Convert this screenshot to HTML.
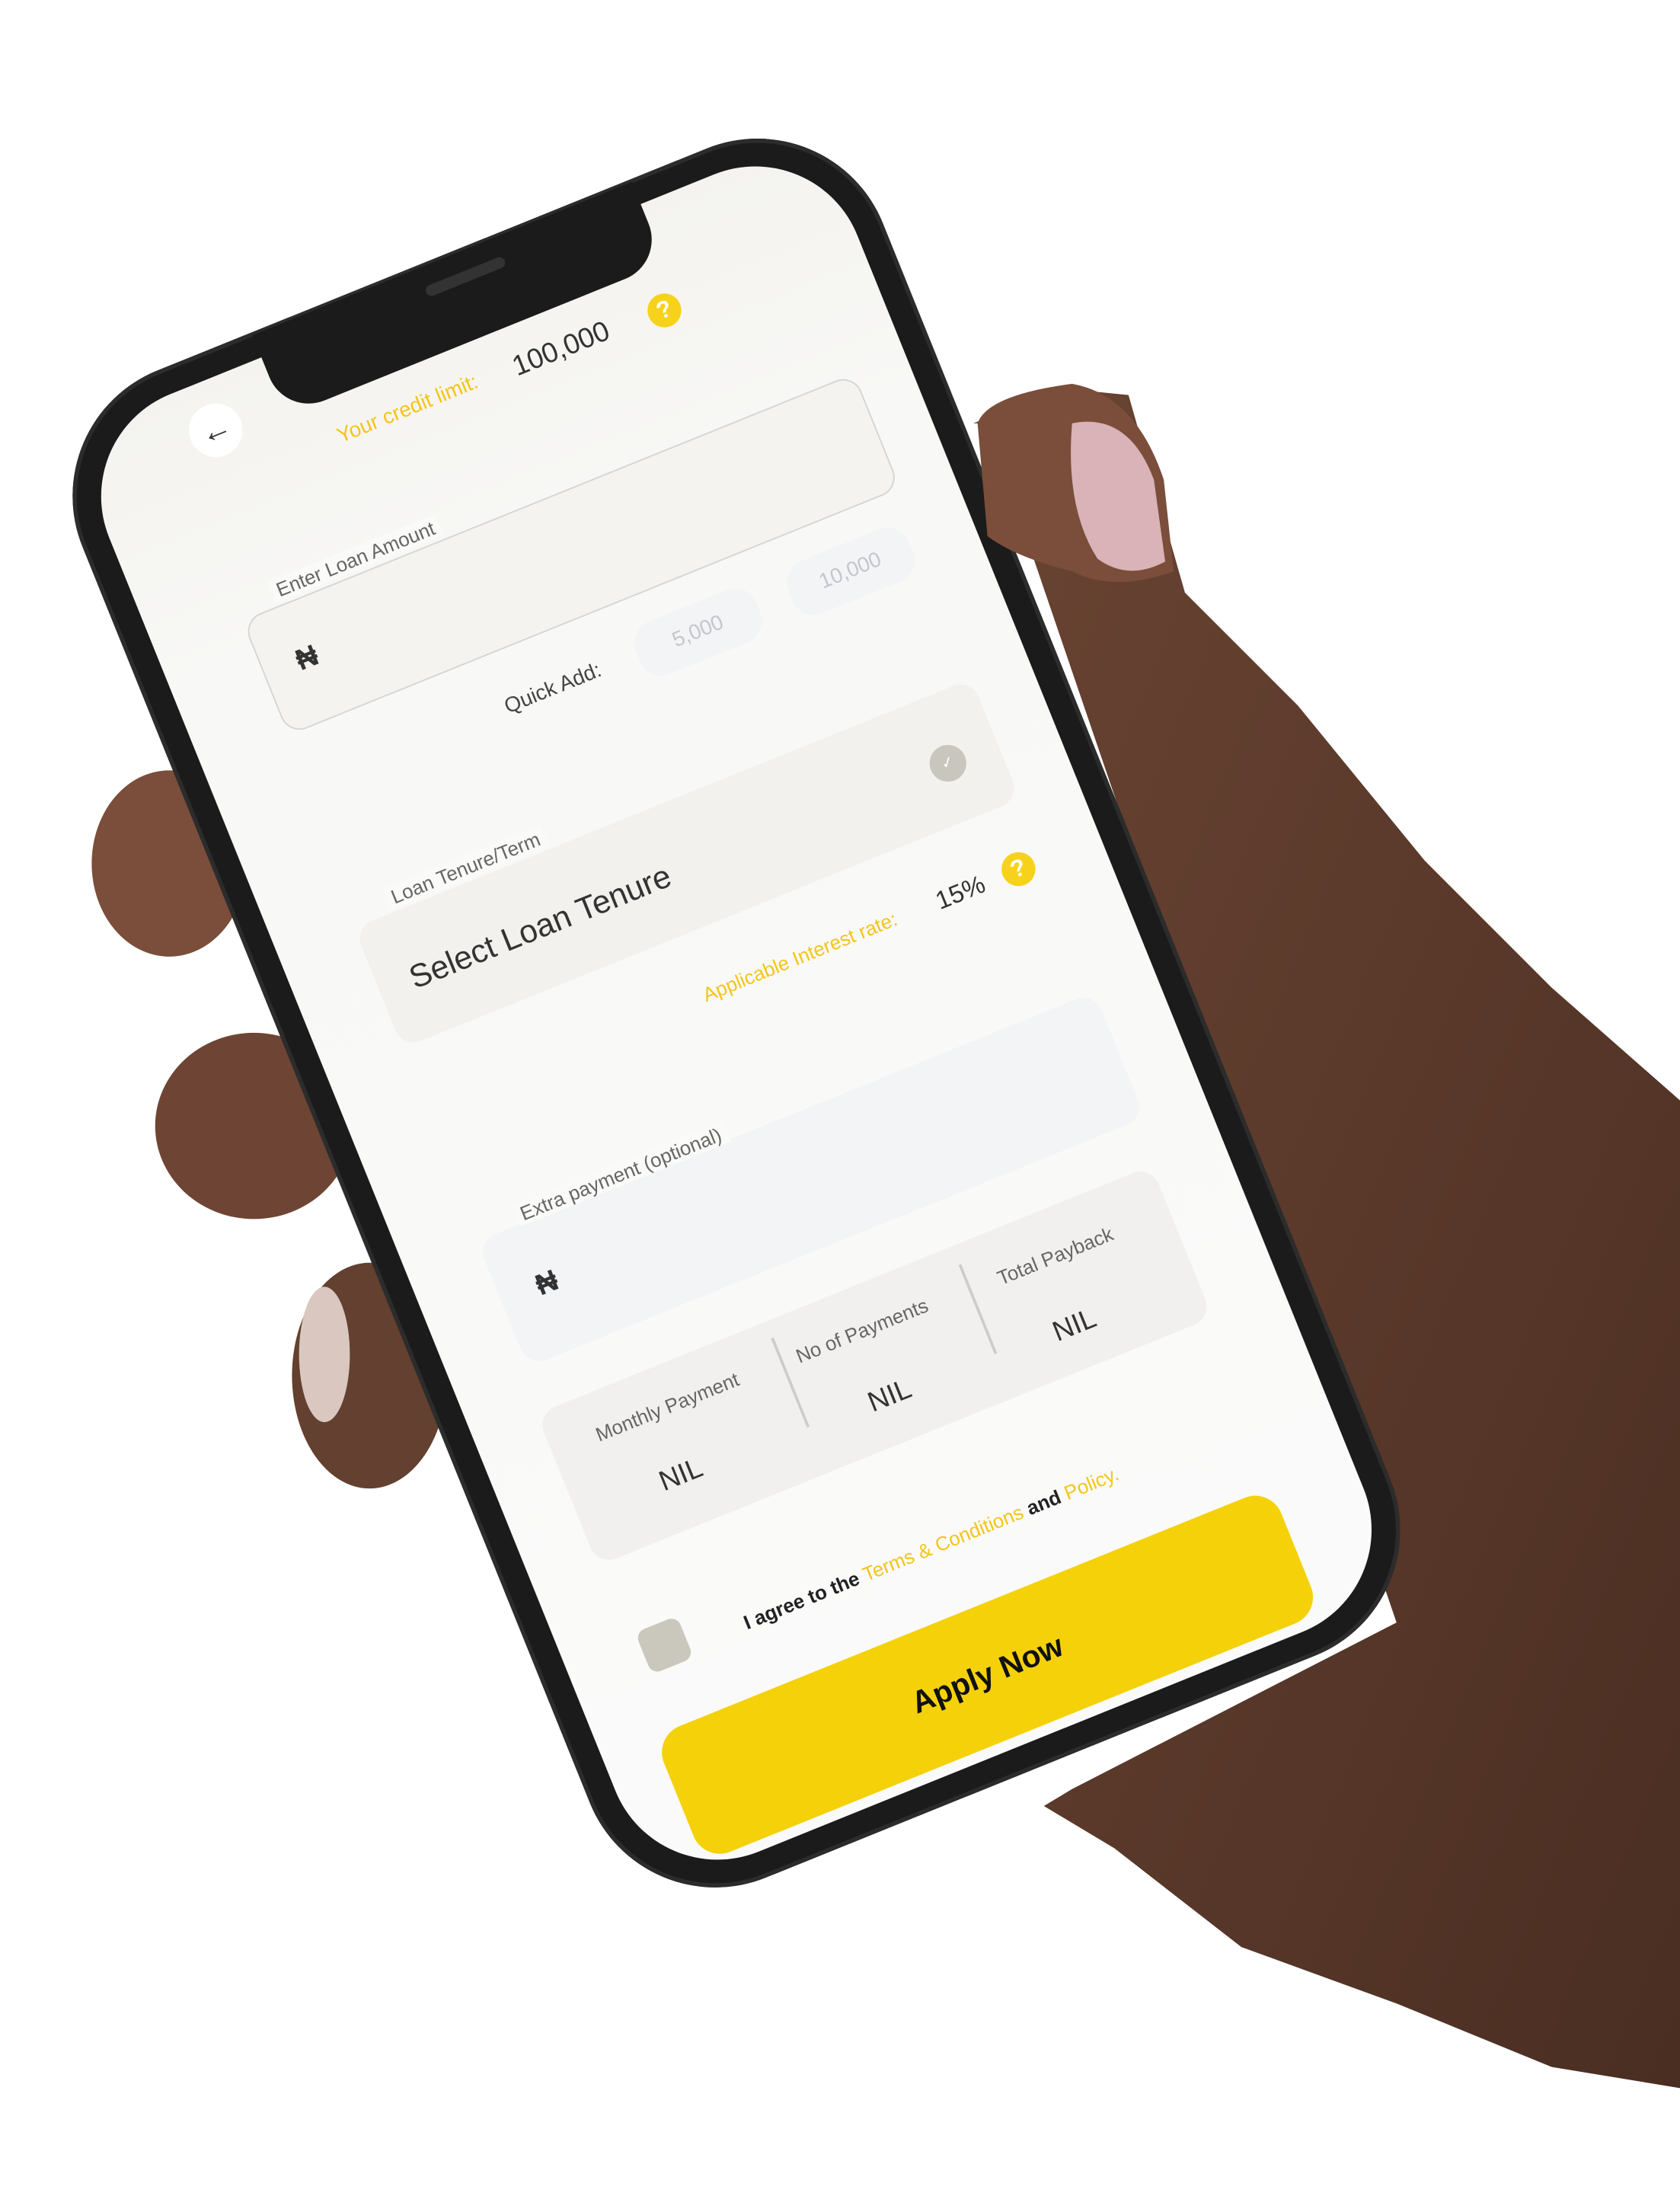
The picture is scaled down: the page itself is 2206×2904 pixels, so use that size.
<!DOCTYPE html>
<html><head><meta charset="utf-8"><style>
html,body{margin:0;padding:0;background:#fff;width:2206px;height:2904px;overflow:hidden}
.s{position:absolute;left:0;top:0;width:1191px;height:1568px;transform:scale(1.8523);transform-origin:0 0;font-family:"Liberation Sans",sans-serif}
.r{position:absolute;transform:translate(-50%,-50%) rotate(-22deg);white-space:nowrap}
.lbl{font-size:14px;color:#666;background:#fafaf9;padding:0 4px}
.nil{font-size:20px;color:#333}
</style></head><body><div class="s">
<svg width="1191" height="1568" style="position:absolute;left:0;top:0">
<defs><linearGradient id="h" x1="0" y1="0" x2="1" y2="1"><stop offset="0" stop-color="#6a4433"/><stop offset="1" stop-color="#4a2e22"/></linearGradient></defs>
<path d="M690 300 L750 275 L800 280 L840 420 L920 500 L1010 610 L1100 700 L1191 780 L1191 1480 L1100 1465 L990 1420 L880 1380 L790 1310 L740 1280 L760 1268 L990 1150 L700 300 Z" fill="url(#h)"/>
<ellipse cx="120" cy="612" rx="55" ry="66" fill="#7a4e3a"/>
<ellipse cx="180" cy="798" rx="70" ry="66" fill="#6e4534"/>
<ellipse cx="262" cy="975" rx="55" ry="80" fill="#63402f"/>
<ellipse cx="230" cy="960" rx="18" ry="48" fill="#d9c7c0"/>
</svg>
<div class="r" style="left:522px;top:718px;width:612px;height:1152px;border-radius:96px;background:#1b1b1b;box-shadow:0 0 0 3px #2c2c2c inset"></div>
<div class="r" style="left:522px;top:718px;width:572px;height:1114px;border-radius:78px;background:linear-gradient(#f4f3ef 0,#f8f8f6 18%,#fafafa 100%)"></div>
<div class="r" style="left:325px;top:212px;width:290px;height:62px;border-radius:0 0 30px 30px;background:#1b1b1b"></div>
<div class="r" style="left:330px;top:196px;width:60px;height:8px;border-radius:4px;background:#333"></div>
<svg style="position:absolute;left:0;top:0" width="1191" height="1568">
<path d="M693 300 Q700 280 760 272 Q805 280 825 340 L832 405 Q790 420 760 405 Q720 395 700 380 Z" fill="#7a4e3a"/>
<path d="M760 300 Q800 292 818 340 L826 398 Q800 412 778 396 Q755 360 760 300Z" fill="#d9b3b8"/>
</svg>
<div class="r" style="left:153px;top:305px;width:38px;height:38px;border-radius:50%;background:#fff;font-size:22px;line-height:38px;text-align:center;color:#333">←</div>
<div class="r" style="left:289px;top:290px;font-size:15px;color:#f5c518">Your credit limit:</div>
<div class="r" style="left:398px;top:248px;font-size:20px;color:#333">100,000</div>
<div class="r" style="left:471px;top:220px;width:24px;height:24px;border-radius:50%;background:#f7d21b;color:#fff;font-size:17px;line-height:24px;text-align:center;font-weight:bold">?</div>
<div class="r" style="left:405px;top:393px;width:466px;height:86px;border-radius:14px;border:1.5px solid #d5d5d3;background:#f4f3f0"></div>
<div class="r lbl" style="left:252px;top:396px">Enter Loan Amount</div>
<div class="r" style="left:218px;top:467px;font-size:21px;font-weight:bold;color:#333">₦</div>
<div class="r" style="left:392px;top:488px;font-size:15px;color:#444">Quick Add:</div>
<div class="r" style="left:495px;top:448px;width:92px;height:40px;border-radius:16px;background:#f3f4f6;color:#c4c6cc;font-size:15px;line-height:40px;text-align:center">5,000</div>
<div class="r" style="left:603px;top:405px;width:92px;height:40px;border-radius:16px;background:#f3f4f6;color:#c4c6cc;font-size:15px;line-height:40px;text-align:center">10,000</div>
<div class="r" style="left:487px;top:612px;width:472px;height:92px;border-radius:14px;background:#f2f1ee"></div>
<div class="r lbl" style="left:330px;top:615px">Loan Tenure/Term</div>
<div class="r" style="left:383px;top:657px;font-size:23px;color:#333">Select Loan Tenure</div>
<div class="r" style="left:672px;top:541px;width:26px;height:26px;border-radius:50%;background:#c8c6bd;color:#fff;font-size:11px;line-height:26px;text-align:center">✓</div>
<div class="r" style="left:567px;top:678px;font-size:14px;color:#f5c518">Applicable Interest rate:</div>
<div class="r" style="left:681px;top:633px;font-size:18px;color:#333">15%</div>
<div class="r" style="left:722px;top:616px;width:24px;height:24px;border-radius:50%;background:#f7d21b;color:#fff;font-size:17px;line-height:24px;text-align:center;font-weight:bold">?</div>
<div class="r" style="left:575px;top:836px;width:472px;height:96px;border-radius:14px;background:#f3f4f6"></div>
<div class="r lbl" style="left:440px;top:832px">Extra payment (optional)</div>
<div class="r" style="left:388px;top:910px;font-size:21px;font-weight:bold;color:#333">₦</div>
<div class="r" style="left:620px;top:968px;width:470px;height:116px;border-radius:14px;background:#f1f0ee"></div>
<div class="r" style="left:560px;top:980px;width:1.5px;height:68px;background:#ccc"></div>
<div class="r" style="left:693px;top:928px;width:1.5px;height:68px;background:#ccc"></div>
<div class="r" style="left:473px;top:997px;font-size:14px;color:#666">Monthly Payment</div>
<div class="r nil" style="left:483px;top:1046px">NIL</div>
<div class="r" style="left:611px;top:943px;font-size:14px;color:#666">No of Payments</div>
<div class="r nil" style="left:631px;top:990px">NIL</div>
<div class="r" style="left:748px;top:890px;font-size:14px;color:#666">Total Payback</div>
<div class="r nil" style="left:762px;top:940px">NIL</div>
<div class="r" style="left:660px;top:1097px;font-size:14px;font-weight:bold;color:#222">I agree to the <span style="color:#f5c518;font-weight:normal">Terms &amp; Conditions</span> and <span style="color:#f5c518;font-weight:normal">Policy.</span></div>
<div class="r" style="left:471px;top:1166px;width:32px;height:32px;border-radius:7px;background:#cac7bd"></div>
<div class="r" style="left:700px;top:1187px;width:472px;height:96px;border-radius:20px;background:#f5d10a;font-size:22px;font-weight:bold;color:#111;line-height:96px;text-align:center">Apply Now</div>
</div></body></html>
